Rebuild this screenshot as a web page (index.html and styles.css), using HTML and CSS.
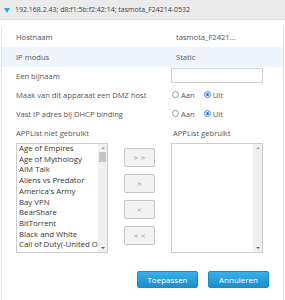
FILE: index.html
```html
<!DOCTYPE html>
<html lang="nl">
<head>
  <meta charset="UTF-8" />
  <title>Apparaat</title>
  <link rel="stylesheet" href="styles.css">
</head>
<body>
  <div class="header">
    <span class="caret"></span>
    <span class="header-text">192.168.2.43; d8:f1:5b:f2:42:14; tasmota_F24214-0532</span>
  </div>

  <div class="panel">
    <div class="row row-first">
      <span class="label">Hostnaam</span>
      <span class="value">tasmota_F2421...</span>
    </div>
    <div class="row row-alt">
      <span class="label">IP modus</span>
      <span class="value">Static</span>
    </div>
    <div class="row row-input">
      <span class="label">Een bijnaam</span>
      <input type="text" class="text-input" />
    </div>
    <div class="row row-radio">
      <span class="label">Maak van dit apparaat een DMZ host</span>
      <span class="radios">
        <span class="radio"></span><span class="radio-text">Aan</span>
        <span class="radio checked"></span><span class="radio-text">Uit</span>
      </span>
    </div>
    <div class="row row-radio">
      <span class="label">Vast IP adres bij DHCP binding</span>
      <span class="radios">
        <span class="radio"></span><span class="radio-text">Aan</span>
        <span class="radio checked"></span><span class="radio-text">Uit</span>
      </span>
    </div>
    <div class="row row-radio">
      <span class="label">APPList niet gebruikt</span>
      <span class="value-plain">APPList gebruikt</span>
    </div>

    <div class="lists">
      <div class="listbox">
        <div class="items">
          <div>Age of Empires</div>
          <div>Age of Mythology</div>
          <div>AIM Talk</div>
          <div>Aliens vs Predator</div>
          <div>America's Army</div>
          <div>Bay VPN</div>
          <div>BearShare</div>
          <div>BitTorrent</div>
          <div>Black and White</div>
          <div>Call of Duty(-United O</div>
          <div>Castle Wolfenstein</div>
        </div>
        <div class="scrollbar">
          <span class="arrow up"></span>
          <span class="thumb"></span>
          <span class="track-fill"></span>
          <span class="arrow down"></span>
        </div>
      </div>

      <div class="movers">
        <button class="mover">&gt; &gt;</button>
        <button class="mover">&gt;</button>
        <button class="mover">&lt;</button>
        <button class="mover">&lt; &lt;</button>
      </div>

      <div class="listbox">
        <div class="items"></div>
        <div class="scrollbar">
          <span class="arrow up"></span>
          <span class="track-fill"></span>
          <span class="arrow down"></span>
        </div>
      </div>
    </div>

    <div class="actions">
      <button class="btn-primary">Toepassen</button>
      <button class="btn-primary">Annuleren</button>
    </div>
  </div>
</body>
</html>
```

FILE: styles.css
```css
html, body { margin: 0; padding: 0; }
body {
  background: #fff;
  color: #555;
  font-family: "Open Sans", "Noto Sans", sans-serif;
  font-size: 7.6px;
  width: 285px;
  height: 300px;
  overflow: hidden;
}

.header {
  height: 20px;
  background: #ebebeb;
  border-bottom: 1px solid #e0e0e0;
  box-sizing: border-box;
  display: flex;
  align-items: center;
  padding-left: 4px;
}
.caret {
  width: 0;
  height: 0;
  border-left: 3px solid transparent;
  border-right: 3px solid transparent;
  border-top: 5px solid #2ca6dc;
  margin-top: 1px;
}
.header-text { margin-left: 5px; color: #444; font-size: 7px; }

.panel {
  margin: 0 1px;
  border-left: 1px solid #e2e2e2;
  border-right: 1px solid #e2e2e2;
  height: 280px;
}

.row {
  display: flex;
  align-items: center;
  padding-left: 14px;
  height: 19px;
}
.row-first { margin-top: 7px; height: 20px; }
.row-alt { background: #eef5fc; height: 20px; }
.row-input { height: 18px; }
.label { width: 155px; flex: none; }
.value { padding-left: 5px; }
.value-plain { padding-left: 2px; }

.text-input {
  width: 92px;
  height: 15px;
  box-sizing: border-box;
  border: 1px solid #cfcfcf;
  border-radius: 1px;
  margin: 0;
  padding: 0;
  margin-top: -2px;
}

.radios { display: flex; align-items: center; padding-left: 1px; }
.radio {
  width: 7px;
  height: 7px;
  box-sizing: border-box;
  border: 1px solid #9a9a9a;
  border-radius: 50%;
  background: #fff;
}
.radio.checked {
  border-color: #6aa6e8;
  background: #1f74df;
  box-shadow: inset 0 0 0 1px #fff;
}
.radio-text { margin-left: 2px; margin-right: 9px; }

.lists {
  display: flex;
  padding-left: 14px;
  margin-top: 1px;
}
.listbox {
  width: 92px;
  height: 110px;
  box-sizing: border-box;
  border: 1px solid #cdcdcd;
  display: flex;
  overflow: hidden;
}
.items {
  flex: 1;
  padding-left: 2px;
  margin-top: -1px;
  color: #333;
  font-size: 7.8px;
  line-height: 10.7px;
  white-space: nowrap;
  overflow: hidden;
}
.scrollbar {
  width: 9px;
  background: #f0f0f0;
  display: flex;
  flex-direction: column;
  align-items: center;
}
.arrow {
  width: 0;
  height: 0;
  border-left: 2px solid transparent;
  border-right: 2px solid transparent;
  margin: 3px 0;
}
.arrow.up { border-bottom: 2px solid #a0a0a0; }
.arrow.down { border-top: 2px solid #606060; }
.thumb {
  width: 7px;
  height: 10px;
  background: #c6c6c6;
}
.track-fill { flex: 1; }

.movers {
  display: flex;
  flex-direction: column;
  gap: 7px;
  margin: 5px 16px 0;
}
.mover {
  width: 31px;
  height: 19px;
  margin: 0;
  padding: 0;
  border: 1px solid #c4c4c4;
  border-radius: 2px;
  background: #f2f2f2;
  color: #888;
  font-family: "DejaVu Sans", sans-serif;
  font-size: 6px;
}

.actions {
  display: flex;
  justify-content: flex-end;
  gap: 10px;
  padding-right: 14px;
  margin-top: 18px;
}
.btn-primary {
  width: 61px;
  height: 17px;
  margin: 0;
  padding: 0;
  border: 1px solid #1a8ac4;
  border-radius: 2px;
  background: linear-gradient(#38b1e7, #1b8fcb);
  color: #fff;
  font-family: inherit;
  font-size: 8px;
}
```
